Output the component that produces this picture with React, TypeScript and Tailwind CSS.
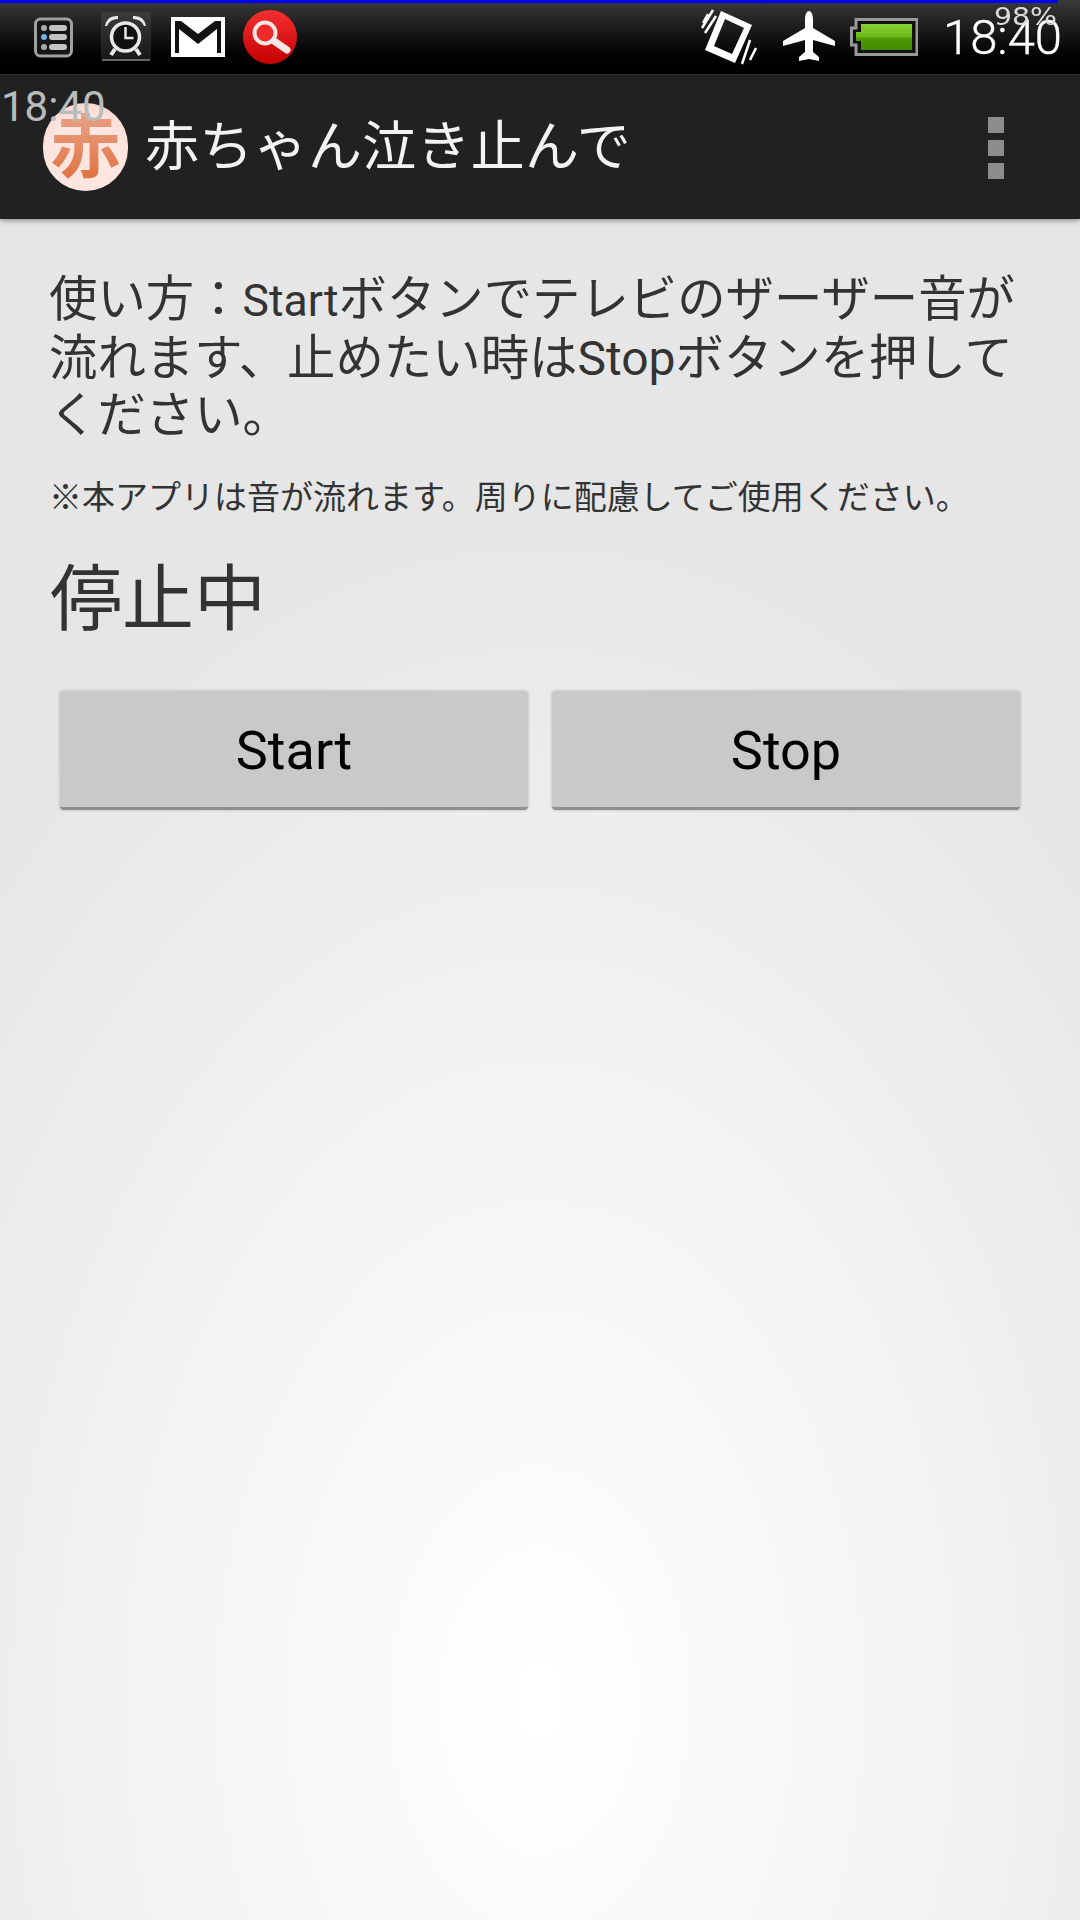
export default function App() {
  const font = { fontFamily: 'Roboto, "Noto Sans CJK JP", sans-serif' };
  return (
    <div style={font} className="relative w-[1080px] h-[1920px] overflow-hidden flex flex-col bg-[radial-gradient(ellipse_780px_1200px_at_540px_1700px,#ffffff_0%,#f7f7f7_35%,#eeeeee_70%,#e6e6e6_100%)]">
      {/* Status bar */}
      <div className="relative h-[74px] shrink-0 flex items-center justify-between bg-gradient-to-b from-[#3a3a3a] via-[#0c0c0c] via-60% to-black">
        <div className="absolute left-0 top-0 h-[3px] w-[1058px] bg-[#0000ff]" />
        <div className="flex items-center pl-[34px] h-full">
          <svg width="40" height="42" viewBox="0 0 40 42" className="mt-[1px]">
            <rect x="1.5" y="2" width="36" height="37" rx="5" fill="#161616" stroke="#a0a0a0" strokeWidth="3" />
            <circle cx="10" cy="11" r="3" fill="#aaa" /><rect x="15" y="8" width="18" height="6" rx="3" fill="#c4c4c4" />
            <circle cx="10" cy="20" r="3" fill="#6db3e8" /><rect x="15" y="17" width="18" height="6" rx="3" fill="#c4c4c4" />
            <circle cx="10" cy="30" r="3" fill="#aaa" /><rect x="15" y="27" width="18" height="6" rx="3" fill="#c4c4c4" />
          </svg>
          <svg width="50" height="50" viewBox="0 0 50 50" className="ml-[27px]">
            <defs>
              <linearGradient id="ab" x1="0" y1="0" x2="0" y2="1">
                <stop offset="0" stopColor="#3c3c3c" /><stop offset="1" stopColor="#161616" />
              </linearGradient>
            </defs>
            <rect x="0" y="0" width="50" height="49" rx="3" fill="url(#ab)" />
            <rect x="1" y="47" width="48" height="2" fill="#666" />
            <circle cx="24.500" cy="25" r="14" fill="#111" stroke="#e8e8e8" strokeWidth="3.500" />
            <path d="M24.500 15v11h8" fill="none" stroke="#e8e8e8" strokeWidth="2.500" />
            <path d="M4 14 Q6 3 17 4 L17 7 Q9 7 6 14 Z M45 14 Q43 3 32 4 L32 7 Q40 7 43 14 Z" fill="#e8e8e8" />
            <path d="M14 37l-4 6M35 37l4 6" stroke="#e8e8e8" strokeWidth="4" />
          </svg>
          <svg width="54" height="40" viewBox="0 0 54 40" className="ml-[20px]">
            <rect width="54" height="40" fill="#fff" />
            <path d="M4 36V4h6L27 17 44 4h6v32h-4V12L27 27 8 12v24z" fill="#111" />
          </svg>
          <svg width="54" height="54" viewBox="0 0 54 54" className="ml-[18px]">
            <defs>
              <linearGradient id="rg" x1="0" y1="0" x2="0" y2="1">
                <stop offset="0" stopColor="#f63030" /><stop offset="1" stopColor="#c40000" />
              </linearGradient>
            </defs>
            <circle cx="27" cy="27" r="27" fill="url(#rg)" />
            <circle cx="22" cy="23" r="10.500" fill="#f02a2a" stroke="#f6e6e6" strokeWidth="4" />
            <path d="M31 31l13 9" stroke="#f6e6e6" strokeWidth="7" strokeLinecap="round" />
          </svg>
        </div>
        <div className="flex items-center h-full pr-[18px]">
          <svg width="58" height="58" viewBox="0 0 58 58">
            <path d="M21 3 L52 17 L35 55 L5 42 Z M25 11 L14 38 L32 46 L44 20 Z" fill="#fff" fillRule="evenodd" />
            <path d="M13 2 L2 20 M8 6 L3 15 M16 8 L5 25 M50 32 L42 56 M56 40 L50 52" stroke="#fff" strokeWidth="2.500" />
          </svg>
          <svg width="52" height="52" viewBox="0 0 52 52" className="ml-[25px]">
            <path d="M26 0c2 0 4 3 4 9v8l22 13v5l-22-6v12l6 5v4l-10-2-10 2v-4l6-5V29L0 35v-5l22-13V9c0-6 2-9 4-9z" fill="#fff" />
          </svg>
          <svg width="68" height="38" viewBox="0 0 68 38" className="ml-[15px]">
            <path d="M6 1.500H67V36.500H6V27H1.500V10H6Z" fill="#111" stroke="#999" strokeWidth="3" />
            <defs>
              <linearGradient id="bg" x1="0" y1="0" x2="0" y2="1">
                <stop offset="0" stopColor="#86d030" /><stop offset="0.5" stopColor="#6cb81c" /><stop offset="0.55" stopColor="#4c9a04" /><stop offset="1" stopColor="#428c00" />
              </linearGradient>
            </defs>
            <path d="M11 6H62V32H11V23H6V14H11Z" fill="url(#bg)" />
          </svg>
          <span className="ml-[25px] text-[49px] leading-none font-light text-white [-webkit-text-stroke:0.4px_white]">18:40</span>
        </div>
        <span className="absolute left-[994px] top-[5px] text-[24px] leading-[24px] text-[#dcdcdc] font-normal origin-left scale-x-[1.18] [font-family:'DejaVu_Sans',sans-serif]">98%</span>
      </div>

      {/* Action bar */}
      <div className="relative h-[145px] shrink-0 flex items-center justify-between bg-[#212121] border-t border-[#2c2c2c] shadow-[0_2px_5px_rgba(0,0,0,0.35)]">
        <span className="absolute left-[1px] top-[7px] text-[42px] leading-[50px] text-[#b8bcbc] z-10">18:40</span>
        <div className="flex items-center pl-[43px]">
          <div className="w-[85px] h-[88px] rounded-full flex items-center justify-center bg-[radial-gradient(circle_at_50%_60%,#fde6e0_55%,#f8d4ca_88%,#a89c98_100%)] text-[70px] font-bold leading-none">
            <span className="mt-[2px] bg-gradient-to-b from-[#e9a184] to-[#e0703e] bg-clip-text text-transparent">赤</span>
          </div>
          <span className="ml-[17px] mt-[1px] text-[54px] tracking-[0.3px] leading-none text-[#f2f2f2]">赤ちゃん泣き止んで</span>
        </div>
        <div className="flex flex-col gap-[7px] pr-[76px] mt-[1px]">
          <div className="w-[16px] h-[16px] bg-[#8c8c8c]" />
          <div className="w-[16px] h-[16px] bg-[#8c8c8c]" />
          <div className="w-[16px] h-[16px] bg-[#8c8c8c]" />
        </div>
      </div>

      {/* Content */}
      <div className="flex flex-col px-[49px] pt-[52px]">
        <p className="text-[48.4px] leading-[57px] text-[#333333] w-[980px]">使い方：<span className="text-[44.5px]">Start</span>ボタンでテレビのザーザー音が流れます、止めたい時は<span className="text-[48px]">Stop</span>ボタンを押してください。</p>
        <p className="mt-[29px] text-[33px] leading-[50px] text-[#333333] whitespace-nowrap">※本アプリは音が流れます。周りに配慮してご使用ください。</p>
        <p className="mt-[27px] ml-[1px] text-[72px] leading-[100px] text-[#333333]">停止中</p>
        <div className="mt-[41px] ml-[11px] flex gap-[24px]">
          <button className="w-[468px] h-[119px] pt-[3px] rounded-[4px] bg-[#c9c9c9] border-b-[3px] border-[#8f8f8f] shadow-[0_0_3px_rgba(0,0,0,0.25)] text-[54px] text-black">Start</button>
          <button className="w-[468px] h-[119px] pt-[3px] rounded-[4px] bg-[#c9c9c9] border-b-[3px] border-[#8f8f8f] shadow-[0_0_3px_rgba(0,0,0,0.25)] text-[54px] text-black">Stop</button>
        </div>
      </div>
    </div>
  );
}
